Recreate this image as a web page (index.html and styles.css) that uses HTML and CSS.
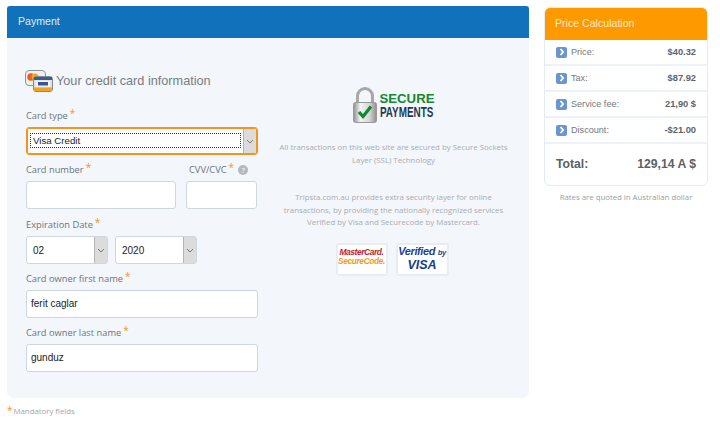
FILE: index.html
```html
<!DOCTYPE html>
<html lang="en">
<head>
<meta charset="utf-8">
<title>Payment</title>
<link rel="stylesheet" href="styles.css">
</head>
<body>
<div class="page">
  <main class="main">
    <section class="panel">
      <h2 class="panel-head">Payment</h2>
      <div class="panel-body">
        <form class="form">
          <h3 class="form-title">
            <svg class="cards" width="28" height="22" viewBox="0 0 28 22">
              <rect x="0.5" y="0.5" width="20" height="15" rx="3.5" fill="#eef0f2" stroke="#8f9298"/>
              <circle cx="6" cy="7" r="3.8" fill="#e8601c"/>
              <circle cx="10" cy="7" r="3.4" fill="#f6a623"/>
              <rect x="8.5" y="6.5" width="19" height="15" rx="2.5" fill="#dfe3e8" stroke="#85898f"/>
              <rect x="9" y="7" width="18" height="3" fill="#3f5f86"/>
              <rect x="11" y="11" width="14" height="5.5" fill="#f4f6fa"/>
              <rect x="13" y="12" width="10" height="3.5" fill="#35559a"/>
              <rect x="9" y="17.5" width="18" height="3.5" fill="#f0a21e"/>
            </svg>
            Your credit card information
          </h3>
          <div class="field">
            <label class="label">Card type<span class="req">*</span></label>
            <div class="select select-focus">
              <span class="value value-dotted">Visa Credit</span>
              <span class="arrow"><svg width="8" height="5" viewBox="0 0 8 5"><path d="M1 1l3 3 3-3" fill="none" stroke="#777" stroke-width="1"/></svg></span>
            </div>
          </div>
          <div class="row-card">
            <div class="field">
              <label class="label">Card number<span class="req">*</span></label>
              <div class="input"></div>
            </div>
            <div class="field">
              <label class="label label-cvv">CVV/CVC<span class="req">*</span><span class="help">?</span></label>
              <div class="input"></div>
            </div>
          </div>
          <div class="field">
            <label class="label">Expiration Date<span class="req">*</span></label>
            <div class="row-date">
              <div class="select select-month"><span class="value">02</span><span class="arrow"><svg width="8" height="5" viewBox="0 0 8 5"><path d="M1 1l3 3 3-3" fill="none" stroke="#777" stroke-width="1"/></svg></span></div>
              <div class="select select-year"><span class="value">2020</span><span class="arrow"><svg width="8" height="5" viewBox="0 0 8 5"><path d="M1 1l3 3 3-3" fill="none" stroke="#777" stroke-width="1"/></svg></span></div>
            </div>
          </div>
          <div class="field">
            <label class="label">Card owner first name<span class="req">*</span></label>
            <div class="input input-text">ferit caglar</div>
          </div>
          <div class="field">
            <label class="label">Card owner last name<span class="req">*</span></label>
            <div class="input input-text">gunduz</div>
          </div>
        </form>
        <aside class="secure">
          <div class="secure-logo">
            <svg width="24" height="36" viewBox="0 0 24 36">
              <defs>
                <linearGradient id="lk" x1="0" x2="1" y1="0" y2="0"><stop offset="0" stop-color="#8f8f8f"/><stop offset="0.3" stop-color="#f4f4f4"/><stop offset="0.7" stop-color="#d4d4d4"/><stop offset="1" stop-color="#8f8f8f"/></linearGradient>
              </defs>
              <path d="M4.5 17V9a7.5 7.5 0 0 1 15 0v8" fill="none" stroke="#a8a8a8" stroke-width="3"/>
              <rect x="0.5" y="15.5" width="23" height="20" rx="2" fill="url(#lk)" stroke="#999"/>
              <path d="M6 25l4 4.5 8-10" fill="none" stroke="#0f8a2e" stroke-width="3.2"/>
            </svg>
            <div class="secure-words"><span class="w1">SECURE</span><span class="w2">PAYMENTS</span></div>
          </div>
          <p class="note note-1">All transactions on this web site are secured by Secure Sockets Layer (SSL) Technology</p>
          <p class="note note-2">Tripsta.com.au provides extra security layer for online transactions, by providing the nationally recognized services Verified by Visa and Securecode by Mastercard.</p>
          <div class="badges">
            <div class="badge badge-mc"><span class="mc1">MasterCard.</span><span class="mc2">SecureCode.</span></div>
            <div class="badge badge-visa"><span class="vbv1">Verified <small>by</small></span><span class="vbv2">VISA</span></div>
          </div>
        </aside>
      </div>
    </section>
    <p class="mandatory"><span class="req">*</span>Mandatory fields</p>
  </main>
  <aside class="side">
    <section class="price">
      <h2 class="price-head">Price Calculation</h2>
      <ul class="price-list">
        <li class="price-row"><span class="chev"><svg width="6" height="8" viewBox="0 0 6 8"><path d="M1.5 1l2.6 3-2.6 3" fill="none" stroke="#fff" stroke-width="1.8"/></svg></span><span class="pname">Price:</span><b>$40.32</b></li>
        <li class="price-row"><span class="chev"><svg width="6" height="8" viewBox="0 0 6 8"><path d="M1.5 1l2.6 3-2.6 3" fill="none" stroke="#fff" stroke-width="1.8"/></svg></span><span class="pname">Tax:</span><b>$87.92</b></li>
        <li class="price-row"><span class="chev"><svg width="6" height="8" viewBox="0 0 6 8"><path d="M1.5 1l2.6 3-2.6 3" fill="none" stroke="#fff" stroke-width="1.8"/></svg></span><span class="pname">Service fee:</span><b>21,90 $</b></li>
        <li class="price-row"><span class="chev"><svg width="6" height="8" viewBox="0 0 6 8"><path d="M1.5 1l2.6 3-2.6 3" fill="none" stroke="#fff" stroke-width="1.8"/></svg></span><span class="pname">Discount:</span><b>-$21.00</b></li>
      </ul>
      <div class="total"><span>Total:</span><span>129,14 A $</span></div>
    </section>
    <p class="rates">Rates are quoted in Australian dollar</p>
  </aside>
</div>
</body>
</html>
```
FILE: styles.css
```css
* { box-sizing: border-box; }
html, body { margin: 0; padding: 0; }
body {
  width: 720px;
  height: 422px;
  overflow: hidden;
  background: #fff;
  font-family: "Liberation Sans", Arial, sans-serif;
  color: #6b7079;
}
.page {
  display: flex;
  align-items: flex-start;
  gap: 15px;
  padding: 6px 12px 0 7px;
}
.main { width: 522px; flex: none; }
.panel {
  background: #f3f6fa;
  border-radius: 0 0 7px 7px;
  height: 392px;
}
.panel-head {
  margin: 0;
  height: 32px;
  background: #1172bb;
  border-radius: 3px 3px 0 0;
  color: #dcebf6;
  font-size: 10.6px;
  font-weight: normal;
  line-height: 31px;
  padding-left: 11px;
}
.panel-body { display: flex; }
.form { width: 251px; margin-left: 19px; padding-top: 32px; flex: none; }
.form-title {
  display: flex;
  align-items: center;
  gap: 3px;
  margin: 0 0 17px -1px;
  font-size: 12.7px;
  font-weight: normal;
  color: #777c84;
  height: 22px;
}
.field { display: block; }
.label {
  display: block;
  height: 14px;
  font-family: "Open Sans", sans-serif;
  font-size: 9.3px;
  line-height: 14px;
  color: #6f747c;
  margin-bottom: 4px;
}
.label-cvv { padding-left: 3px; white-space: nowrap; }
.req { color: #f7941d; margin-left: 2px; font-size: 10px; line-height: 1; position: relative; top: -2px; }
.select {
  display: flex;
  height: 28px;
  background: #fff;
  border: 1px solid #ced6de;
  border-radius: 3px;
  font-size: 10px;
  color: #222;
  margin-bottom: 8px;
}
.select-focus { border: 1px solid #f4931e; box-shadow: 0 0 0 1px #f4931e inset; padding: 1px; width: 232px; }
.value { flex: 1; display: flex; align-items: center; padding-left: 6px; }
.value-dotted { margin: 4px 2px 5px 2px; border: 1px dotted #333; padding-left: 2px; font-size: 9.7px; }
.arrow {
  width: 13px;
  flex: none;
  background: #dcdcdc;
  border-left: 1px solid #b5b5b5;
  display: flex;
  align-items: center;
  justify-content: center;
}
.row-card { display: grid; grid-template-columns: 150px 71px; gap: 10px; margin-bottom: 9px; }
.input {
  height: 28px;
  background: #fff;
  border: 1px solid #ced6de;
  border-radius: 3px;
}
.input-text {
  width: 232px;
  font-size: 10px;
  color: #222;
  line-height: 26px;
  padding-left: 4px;
  margin-bottom: 8px;
}
.help {
  display: inline-block;
  width: 10px;
  height: 10px;
  border-radius: 50%;
  background: #b4b8bd;
  color: #fff;
  font-size: 8px;
  line-height: 10px;
  text-align: center;
  margin-left: 4px;
}
.row-date { display: flex; gap: 7px; }
.select-month, .select-year { width: 82px; }
.secure { width: 229px; margin-left: 2px; padding-top: 49px; text-align: center; }
.secure-logo { display: flex; justify-content: center; align-items: center; gap: 3px; height: 36px; margin-bottom: 18px; }
.secure-words { display: flex; flex-direction: column; width: 55px; text-align: left; font-weight: bold; }
.w1 { color: #14872f; font-size: 13.2px; line-height: 13px; }
.w2 { color: #1f3a57; font-size: 15px; line-height: 14px; transform: scaleX(0.66); transform-origin: left; white-space: nowrap; }
.note {
  font-family: "Open Sans", sans-serif;
  font-size: 7.85px;
  line-height: 12.5px;
  color: #a9adb3;
  margin: 0;
}
.note-1 { margin-bottom: 25px; }
.note-2 { margin-bottom: 14px; }
.badges { display: flex; justify-content: center; gap: 8px; padding-right: 3px; }
.badge {
  height: 33px;
  background: #fff;
  border: 2px solid #e8edf5;
  border-radius: 3px;
  display: flex;
  flex-direction: column;
  align-items: center;
  justify-content: center;
  font-weight: bold;
}
.badge-mc { width: 52px; padding-bottom: 4px; line-height: 9px; }
.badge-visa { width: 53px; padding-bottom: 2px; }
.mc1 { color: #c4202c; font-size: 8.4px; font-style: italic; letter-spacing: -0.4px; }
.mc2 { color: #f09a1e; font-size: 8.4px; font-style: italic; letter-spacing: -0.4px; }
.vbv1 { color: #1e3f96; font-size: 11px; font-style: italic; letter-spacing: -0.4px; line-height: 12px; white-space: nowrap; }
.vbv1 small { font-size: 7.5px; }
.vbv2 { color: #1a3a8a; font-size: 12.5px; font-style: italic; line-height: 13px; }
.mandatory { margin: 7px 0 0 0; font-family: "Open Sans", sans-serif; font-size: 7.8px; color: #a0a4aa; }
.mandatory .req { margin-left: 0; margin-right: 1px; top: 0; }
.side { width: 164px; flex: none; padding-top: 1px; }
.price { background: #fff; border: 1px solid #e3edf6; border-radius: 6px; height: 179px; overflow: hidden; }
.price-head {
  margin: -1px -1px 0;
  height: 33px;
  background: #ff9900;
  color: #fdeccf;
  font-size: 10.6px;
  font-weight: normal;
  line-height: 33px;
  padding-left: 11px;
}
.price-list { list-style: none; margin: 0; padding: 0; }
.price-row {
  display: flex;
  align-items: center;
  height: 26px;
  border-bottom: 2px solid #edf2f8;
  padding: 0 11px;
  font-size: 9.1px;
  color: #737780;
}
.price-row b { margin-left: auto; color: #5f636b; font-size: 9.3px; }
.chev {
  width: 11px;
  height: 11px;
  border-radius: 2px;
  background: #6b95cf;
  display: flex;
  align-items: center;
  justify-content: center;
  margin-right: 4px;
}
.total {
  display: flex;
  justify-content: space-between;
  padding: 0 11px 2px;
  height: 42px;
  align-items: center;
  font-size: 12.2px;
  font-weight: bold;
  color: #5b5f67;
}
.rates { margin: 6px 0 0; text-align: center; font-family: "Open Sans", sans-serif; font-size: 7.8px; color: #9a9ea5; }
```
